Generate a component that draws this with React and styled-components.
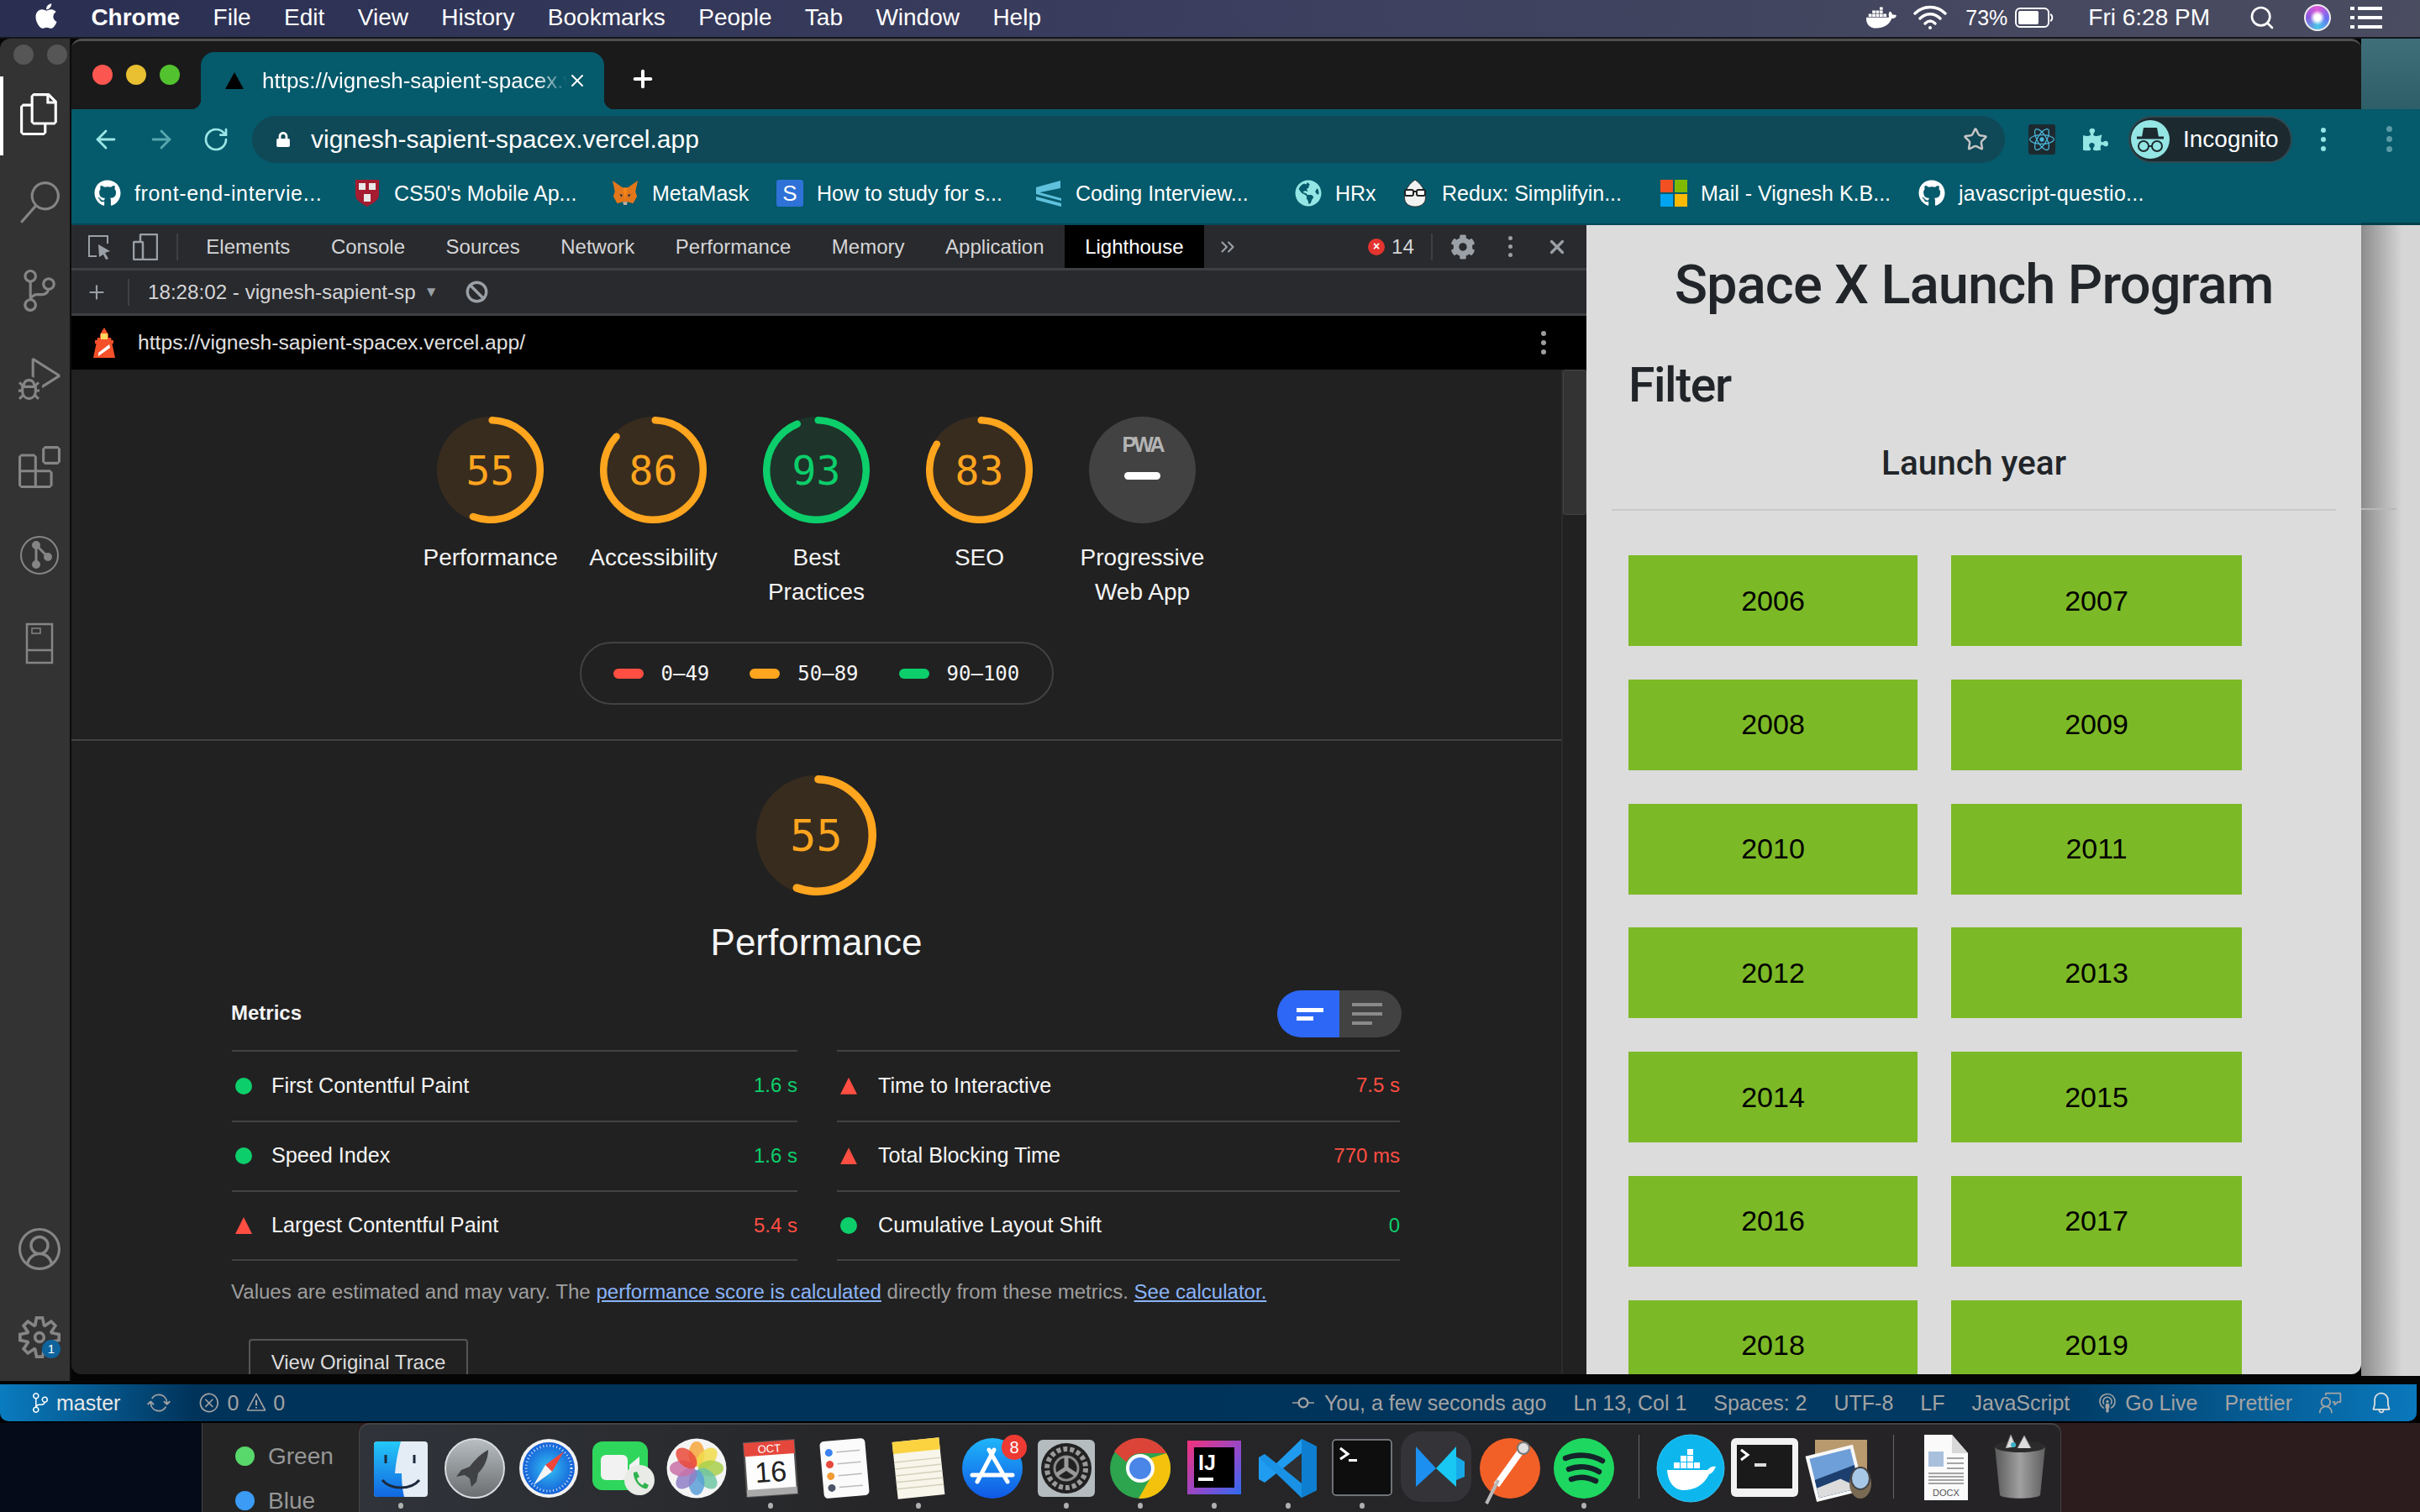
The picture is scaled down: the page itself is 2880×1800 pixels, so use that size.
import React from "react";
import styled, { createGlobalStyle } from "styled-components";
import {
  FaApple, FaDocker, FaGithub, FaLock, FaPuzzlePiece, FaReact, FaCog, FaGlobeAmericas,
} from "react-icons/fa";
import {
  VscFiles, VscSearch, VscSourceControl, VscDebugAlt, VscExtensions, VscAccount, VscSettingsGear,
  VscSync, VscError, VscWarning, VscBell, VscFeedback, VscBroadcast, VscGitCommit,
} from "react-icons/vsc";
import { ArrowLeft, ArrowRight, RotateCw, Star, Search, X, Plus, ChevronsRight, Ban } from "lucide-react";

const GlobalStyle = createGlobalStyle`
  html, body { margin: 0; padding: 0; background: #000; }
  body { font-family: "Liberation Sans", Arial, sans-serif; }
  * { box-sizing: border-box; }
`;

const Screen = styled.div`
  width: 2880px;
  height: 1800px;
  overflow: hidden;
  display: flex;
  flex-direction: column;
  background: #000;
`;
const Gap = styled.span`
  flex: none;
  width: ${(p) => p.$w}px;
`;

/* ---- mac menu bar ---- */
const MenuBar = styled.div`
  height: 46px;
  flex: none;
  display: flex;
  align-items: center;
  padding: 0 45px 2px 40px;
  color: #fff;
  font-size: 28px;
  background: linear-gradient(90deg, #2a2f52 0%, #3b3e5e 50%, #4a4d60 100%);
  border-bottom: 2px solid #15161c;
`;
const MenuItems = styled.div`
  display: flex;
  align-items: center;
  gap: 39.4px;
`;
const AppleMark = styled(FaApple)`
  width: 30px;
  height: 34px;
  margin-right: -1px;
  margin-top: -4px;
`;
const MenuLabel = styled.span`
  font-weight: ${(p) => (p.$bold ? 700 : 400)};
`;
const MenuStatus = styled.div`
  margin-left: auto;
  display: flex;
  align-items: center;
`;
const StatusText = styled.span`
  font-size: ${(p) => p.$size || 28}px;
  margin: ${(p) => p.$margin || "0"};
`;
const Siri = styled.div`
  width: 32px;
  height: 32px;
  border-radius: 50%;
  margin: 0 23px 0 34px;
  border: 2px solid #eee;
  background: radial-gradient(circle, #fff 0 18%, transparent 45%), conic-gradient(#e05ad8, #6a6cf0, #49c6e8, #8a5ae0, #e05ad8);
`;

/* ---- middle row: activity bar, chrome window, what is behind it ---- */
const Workspace = styled.div`
  height: 1602px;
  flex: none;
  display: flex;
  align-items: flex-start;
  background: #050505;
`;
const ActivityBar = styled.div`
  width: 85px;
  height: 1598px;
  flex: none;
  display: flex;
  flex-direction: column;
  background: #333333;
  border-right: 2px solid #0c0c0c;
  border-radius: 12px 0 0 0;
`;
const WindowDots = styled.div`
  height: 37px;
  display: flex;
  gap: 16px;
  padding: 0 0 0 16px;
  align-items: center;
`;
const GreyDot = styled.span`
  width: 24px;
  height: 24px;
  border-radius: 50%;
  background: #565656;
`;
const ActivitySlot = styled.div`
  height: 105px;
  flex: none;
  position: relative;
  display: flex;
  align-items: center;
  justify-content: center;
  padding-left: 11px;
  color: ${(p) => (p.$active ? "#fff" : "#858585")};
  &::before {
    content: "";
    display: ${(p) => (p.$active ? "block" : "none")};
    position: absolute;
    left: 0;
    top: 8px;
    bottom: 3px;
    width: 4px;
    background: #fff;
  }
`;
const ActivitySpacer = styled.div`
  flex: 1;
`;
const ActivityBadge = styled.span`
  position: absolute;
  left: 50px;
  top: 56px;
  width: 22px;
  height: 22px;
  border-radius: 50%;
  background: #0e639c;
  color: #fff;
  font-size: 15px;
  line-height: 22px;
  text-align: center;
`;

const ChromeWindow = styled.div`
  width: 2725px;
  height: 1590px;
  flex: none;
  display: flex;
  flex-direction: column;
  border-radius: 12px 12px 12px 12px;
  overflow: hidden;
  background: #1a1a1a;
  border-top: 3px solid #4f4f4f;
`;
const TabStrip = styled.div`
  height: 81px;
  flex: none;
  display: flex;
  align-items: flex-end;
  background: #1a1a1a;
  padding-left: 25px;
`;
const Traffic = styled.div`
  display: flex;
  gap: 16px;
  margin: 0 25px 29px 0;
`;
const Light = styled.span`
  width: 24px;
  height: 24px;
  border-radius: 50%;
  background: ${(p) => p.$c};
`;
const Tab = styled.div`
  width: 480px;
  height: 68px;
  position: relative;
  display: flex;
  align-items: center;
  padding: 0 20px 0 29px;
  background: #055a6b;
  border-radius: 16px 16px 0 0;
  color: #fff;
  font-size: 26px;
  &::before, &::after {
    content: "";
    position: absolute;
    bottom: 0;
    width: 12px;
    height: 12px;
  }
  &::before {
    left: -12px;
    background: radial-gradient(circle at 0 0, transparent 12px, #055a6b 12.5px);
  }
  &::after {
    right: -12px;
    background: radial-gradient(circle at 100% 0, transparent 12px, #055a6b 12.5px);
  }
`;
const TabTriangle = styled.span`
  width: 0;
  height: 0;
  flex: none;
  border-left: 11px solid transparent;
  border-right: 11px solid transparent;
  border-bottom: 20px solid #000;
  margin-right: 22px;
`;
const TabTitle = styled.span`
  flex: 1;
  overflow: hidden;
  white-space: nowrap;
  -webkit-mask-image: linear-gradient(90deg, #000 90%, transparent);
  mask-image: linear-gradient(90deg, #000 90%, transparent);
`;
const NewTab = styled(Plus)`
  margin: 0 0 20px 30px;
  color: #fff;
`;

const Toolbar = styled.div`
  height: 72px;
  flex: none;
  display: flex;
  align-items: center;
  background: #055a6b;
  padding: 0 20px 0 24px;
  color: #9be6e6;
`;
const NavGroup = styled.div`
  display: flex;
  align-items: center;
  gap: 32px;
  margin-right: 27px;
`;
const Omnibox = styled.div`
  width: 2086px;
  height: 56px;
  display: flex;
  align-items: center;
  padding: 0 20px 0 28px;
  background: #0f4856;
  border-radius: 28px;
  color: #fff;
  font-size: 30px;
`;
const Url = styled.span`
  margin-left: 24px;
  flex: 1;
`;
const ReactBox = styled.div`
  width: 32px;
  height: 36px;
  margin: 0 33px 0 28px;
  background: #1c2a30;
  border-radius: 3px;
  display: flex;
  align-items: center;
  justify-content: center;
  color: #4bb8dc;
`;
const IncognitoPill = styled.div`
  width: 195px;
  height: 56px;
  margin-left: 24px;
  display: flex;
  align-items: center;
  gap: 16px;
  background: #1c2a30;
  border: 2px solid #2e4a52;
  border-radius: 28px;
  color: #fff;
  font-size: 28px;
  padding-left: 1px;
`;
const IncognitoFace = styled.div`
  width: 46px;
  height: 46px;
  border-radius: 50%;
  background: #94e6e4;
  flex: none;
`;
const VDots = styled.div`
  display: flex;
  flex-direction: column;
  gap: ${(p) => p.$gap || 5}px;
  margin: ${(p) => p.$margin || "0"};
  span {
    width: ${(p) => p.$dot || 5}px;
    height: ${(p) => p.$dot || 5}px;
    border-radius: 50%;
    background: ${(p) => p.$c || "#9e9e9e"};
  }
`;
const BookmarkBar = styled.div`
  height: 66px;
  flex: none;
  display: flex;
  align-items: center;
  gap: 32px;
  padding: 0 0 8px 27px;
  background: #055a6b;
  border-bottom: 2px solid #04495a;
  color: #fff;
  font-size: 25px;
`;
const BookmarkItem = styled.div`
  display: flex;
  align-items: center;
  gap: 16px;
  white-space: nowrap;
  width: ${(p) => p.$w}px;
  flex: none;
  letter-spacing: ${(p) => p.$track || 0}px;
`;
const IconBox = styled.div`
  width: 32px;
  height: 32px;
  flex: none;
  display: flex;
  align-items: center;
  justify-content: center;
`;
const SSquare = styled(IconBox)`
  background: #2e72d8;
  border-radius: 3px;
  color: #fff;
  font-size: 26px;
`;
const MsGrid = styled(IconBox)`
  display: grid;
  grid-template-columns: 1fr 1fr;
  gap: 2px;
  i:nth-child(1) { background: #f25022; }
  i:nth-child(2) { background: #7fba00; }
  i:nth-child(3) { background: #00a4ef; }
  i:nth-child(4) { background: #ffb900; }
  i { display: block; height: 15px; }
`;

const ChromeBody = styled.div`
  flex: 1;
  min-height: 0;
  display: flex;
`;

/* ---- devtools ---- */
const Devtools = styled.div`
  width: 1803px;
  flex: none;
  display: flex;
  flex-direction: column;
  background: #212121;
`;
const DevBar = styled.div`
  height: 54px;
  flex: none;
  display: flex;
  align-items: center;
  background: #292a2d;
  border-bottom: 3px solid #3f4043;
  color: #9aa0a6;
`;
const DevSep = styled.span`
  width: 2px;
  height: 32px;
  background: #3f4043;
  margin: ${(p) => p.$margin || "0"};
`;
const DevTab = styled.div`
  height: 51px;
  display: flex;
  align-items: center;
  padding: 0 24.3px;
  font-size: 24px;
  color: ${(p) => (p.$active ? "#fff" : "#d4d5d7")};
  background: ${(p) => (p.$active ? "#000" : "transparent")};
`;
const MoreTabs = styled(ChevronsRight)`
  margin-left: 15px;
`;
const DevRight = styled.div`
  margin-left: auto;
  display: flex;
  align-items: center;
  padding-right: 22px;
`;
const ErrorDot = styled.span`
  width: 20px;
  height: 20px;
  border-radius: 50%;
  background: #e4342f;
  color: #fff;
  font-size: 14px;
  line-height: 19px;
  font-weight: 700;
  text-align: center;
  margin-right: 8px;
`;
const DevText = styled.span`
  font-size: 24.2px;
  color: #d4d5d7;
`;
const DropArrow = styled.span`
  font-size: 17px;
  margin: 0 32px 0 10px;
`;
const ReportBar = styled.div`
  height: 64px;
  flex: none;
  display: flex;
  align-items: center;
  background: #000;
  color: #e0e0e0;
  font-size: 24.7px;
  padding: 0 0 0 26px;
`;
const ReportUrl = styled.span`
  margin-left: 27px;
  flex: 1;
`;
const ReportBody = styled.div`
  flex: 1;
  min-height: 0;
  display: flex;
`;
const Report = styled.div`
  width: 1773px;
  flex: none;
  overflow: hidden;
  color: #f5f5f5;
`;
const ScrollTrack = styled.div`
  flex: 1;
  border-left: 2px solid #2c2c2c;
`;
const ScrollThumb = styled.div`
  height: 173px;
  background: #333;
  border-radius: 3px;
  border: 1px solid #444;
`;
const GaugeRow = styled.div`
  display: flex;
  justify-content: center;
  padding-top: 56px;
`;
const GaugeItem = styled.div`
  width: 194px;
  display: flex;
  flex-direction: column;
  align-items: center;
  text-align: center;
`;
const GaugeStack = styled.div`
  display: grid;
  width: ${(p) => p.$size}px;
  height: ${(p) => p.$size}px;
  & > * { grid-area: 1 / 1; }
`;
const GaugeNumber = styled.div`
  font-family: "DejaVu Sans Mono", Menlo, monospace;
  font-size: ${(p) => p.$font}px;
  color: ${(p) => p.$c};
  display: flex;
  align-items: center;
  justify-content: center;
`;
const GaugeLabel = styled.div`
  margin-top: 21px;
  width: 160px;
  font-size: 28px;
  line-height: 40.5px;
`;
const PwaBadge = styled.div`
  display: flex;
  flex-direction: column;
  align-items: center;
  padding-top: 21px;
  color: #b4b4b4;
  font-size: 25px;
  font-weight: 700;
  letter-spacing: -3px;
  line-height: 24px;
  i {
    display: block;
    width: 43px;
    height: 9px;
    margin-top: 21px;
    border-radius: 5px;
    background: #fff;
  }
`;
const Legend = styled.div`
  width: 564px;
  height: 75px;
  margin: 39px auto 41px;
  display: flex;
  align-items: center;
  gap: 48px;
  padding-left: 38px;
  border: 2px solid #424242;
  border-radius: 38px;
  font-family: "DejaVu Sans Mono", Menlo, monospace;
  font-size: 24px;
`;
const LegendItem = styled.div`
  display: flex;
  align-items: center;
  gap: 21px;
`;
const Swatch = styled.span`
  width: 36px;
  height: 12px;
  border-radius: 6px;
  background: ${(p) => p.$c};
`;
const Section = styled.div`
  border-top: 2px solid #424242;
  padding-top: 41px;
  display: flex;
  flex-direction: column;
  align-items: center;
`;
const SectionTitle = styled.div`
  margin-top: 26px;
  font-size: 44px;
  line-height: 60px;
`;
const Metrics = styled.div`
  width: 1393px;
  margin-top: 27px;
  align-self: flex-start;
  margin-left: 190px;
`;
const MetricsHead = styled.div`
  height: 56px;
  display: flex;
  align-items: center;
  justify-content: space-between;
  font-size: 24px;
  font-weight: 700;
  margin-bottom: 15px;
`;
const MetricsTitle = styled.span`
  margin-top: -3px;
`;
const Toggle = styled.div`
  width: 148px;
  height: 56px;
  display: flex;
  border-radius: 28px;
  overflow: hidden;
`;
const ToggleSide = styled.div`
  width: 74px;
  display: flex;
  flex-direction: column;
  justify-content: center;
  align-items: flex-start;
  gap: ${(p) => (p.$on ? 5 : 7)}px;
  padding-left: ${(p) => (p.$on ? 23 : 15)}px;
  background: ${(p) => (p.$on ? "#2d67f6" : "#424242")};
`;
const ToggleLine = styled.i`
  display: block;
  width: ${(p) => p.$w}px;
  height: ${(p) => (p.$on ? 5 : 4)}px;
  background: ${(p) => (p.$on ? "#fff" : "#8a8a8a")};
`;
const MetricGrid = styled.div`
  display: grid;
  grid-template-columns: 673px 670px;
  column-gap: 47px;
  padding-left: 1px;
`;
const MetricRow = styled.div`
  height: ${(p) => (p.$last ? 84 : 83.5)}px;
  display: flex;
  align-items: center;
  border-top: 2px solid #424242;
  ${(p) => (p.$last ? "border-bottom: 2px solid #424242;" : "")}
`;
const MetricIcon = styled.span`
  width: 20px;
  height: 20px;
  flex: none;
  margin: 0 ${(p) => (p.$col ? 25 : 23)}px 0 4px;
  background: ${(p) => (p.$bad ? "#ff4e42" : "#0cce6b")};
  border-radius: 50%;
  ${(p) => (p.$bad ? "border-radius: 0; clip-path: polygon(50% 0, 100% 100%, 0 100%);" : "")}
`;
const MetricName = styled.span`
  font-size: 25.2px;
  margin-top: -1px;
`;
const MetricValue = styled.span`
  margin-left: auto;
  font-size: 24px;
  margin-top: -1px;
  color: ${(p) => (p.$bad ? "#ff4e42" : "#0cce6b")};
`;
const Footnote = styled.div`
  margin-top: 23px;
  font-size: 24.05px;
  line-height: 28px;
  color: #9e9e9e;
  a { color: #8ab4f8; text-decoration: underline; }
`;
const TraceButton = styled.div`
  margin: 42px 0 0 21px;
  width: 261px;
  height: 56px;
  display: flex;
  align-items: center;
  justify-content: center;
  border: 2px solid #555;
  border-radius: 4px;
  font-size: 24px;
  color: #dcdcdc;
`;

/* ---- the page in the browser ---- */
const Page = styled.div`
  flex: 1;
  overflow: hidden;
  background: #dcdcdc;
  color: #212529;
  padding-top: 33px;
`;
const PageTitle = styled.h1`
  margin: 0;
  text-align: center;
  font-family: Roboto, "Liberation Sans", sans-serif;
  font-weight: 500;
  font-size: 65px;
  letter-spacing: -0.9px;
  line-height: 76px;
`;
const FilterTitle = styled.h2`
  margin: 49px 0 0 50px;
  font-family: Roboto, "Liberation Sans", sans-serif;
  font-weight: 500;
  font-size: 57px;
  letter-spacing: -1.4px;
  line-height: 66px;
`;
const YearTitle = styled.h3`
  margin: 35px 0 0;
  text-align: center;
  font-family: Roboto, "Liberation Sans", sans-serif;
  font-weight: 500;
  font-size: 40.5px;
  line-height: 48px;
`;
const Rule = styled.div`
  height: 2px;
  margin: 31px 30px 53px;
  background: #c9c9c9;
`;
const YearGrid = styled.div`
  display: grid;
  grid-template-columns: 344px 346px;
  grid-auto-rows: 108px;
  column-gap: 40px;
  row-gap: 39.8px;
  padding-left: 50px;
`;
const YearButton = styled.div`
  display: flex;
  align-items: center;
  justify-content: center;
  background: #7cb927;
  color: #000;
  font-size: 34px;
`;

const Behind = styled.div`
  flex: 1;
  height: 1592px;
  display: flex;
  flex-direction: column;
`;
const BehindTop = styled.div`
  height: 84px;
  background: linear-gradient(180deg, #3f6f79, #2e5f69);
`;
const BehindBar = styled.div`
  height: 138px;
  background: #055a6b;
  padding: 20px 0 0 30px;
  border-bottom: 3px solid #04404d;
`;
const BehindPage = styled.div`
  flex: 1;
  background: linear-gradient(90deg, #8c8c8c, #d6d6d6 70%);
  padding-top: 337px;
  i { display: block; height: 2px; width: 42px; background: #b8b8b8; }
`;

/* ---- vs code status bar ---- */
const StatusBar = styled.div`
  height: 44px;
  width: 2876px;
  flex: none;
  display: flex;
  align-items: center;
  padding: 0 28px 0 36px;
  border-radius: 0 0 10px 10px;
  background: linear-gradient(90deg, #0a7cc0 0%, #00335a 8%, #00335a 50%, #003a63 85%, #0a78bc 100%);
  color: #a3a3a3;
  font-size: 25px;
`;
const StatusGroup = styled.div`
  display: flex;
  align-items: center;
  margin-left: ${(p) => (p.$auto ? "auto" : "0")};
`;
const StatusLabel = styled.span`
  margin: ${(p) => p.$margin || "0"};
  color: ${(p) => p.$c || "inherit"};
  white-space: nowrap;
`;
const CommitIcon = styled(VscGitCommit)`
  transform: rotate(90deg);
`;
const ErrorIcon = styled(VscError)`
  margin-left: 33px;
`;
const BellIcon = styled(VscBell)`
  margin-left: 32px;
  color: #e0e0e0;
`;

/* ---- dock ---- */
const DockRow = styled.div`
  flex: 1;
  display: flex;
  margin-top: 2px;
  background: #2c1c1e;
`;
const Wallpaper = styled.div`
  width: 240px;
  flex: none;
  background: #060b1a;
`;
const ColorPanel = styled.div`
  width: 187px;
  flex: none;
  background: #242424;
  border-left: 1px solid #444;
  padding: 23px 0 0 39px;
  font-size: 28px;
  color: #979797;
  display: flex;
  flex-direction: column;
  gap: 20px;
`;
const ColorRow = styled.div`
  display: flex;
  align-items: center;
  gap: 16px;
  line-height: 33px;
`;
const ColorDot = styled.span`
  width: 23px;
  height: 23px;
  border-radius: 50%;
  background: ${(p) => p.$c};
`;
const Dock = styled.div`
  width: 2026px;
  flex: none;
  display: flex;
  padding-left: 5px;
  background: linear-gradient(90deg, #30343a, #262628 30%, #252325);
  border-top: 2px solid #444;
  border-right: 1px solid #444;
  border-left: 1px solid #444;
  border-radius: 12px 12px 0 0;
`;
const DockItem = styled.div`
  width: 88px;
  flex: none;
  display: flex;
  flex-direction: column;
  align-items: center;
  padding-top: 16px;
  svg { display: block; overflow: visible; }
`;
const DockDot = styled.span`
  width: 6px;
  height: 7px;
  border-radius: 50%;
  margin-top: 5px;
  background: ${(p) => (p.$on ? "#b0b0b0" : "transparent")};
`;
const DockSep = styled.div`
  width: 1px;
  height: 76px;
  margin: 12px ${(p) => p.$right}px 0 ${(p) => p.$left}px;
  background: #666;
  flex: none;
`;
const RaisedSvg = styled.svg`
  margin-top: ${(p) => p.$up}px;
`;

/* drawn icons */
const Wifi = () => (
  <svg width="42" height="32" viewBox="0 0 42 32" fill="none" stroke="#fff" strokeWidth="3.4" strokeLinecap="round">
    <path d="M3 11 C13 1 29 1 39 11" />
    <path d="M9 17 C16 10 26 10 33 17" />
    <path d="M15 23 C19 19 23 19 27 23" />
    <circle cx="21" cy="28" r="2" fill="#fff" stroke="none" />
  </svg>
);
const Battery = () => (
  <svg width="46" height="24" viewBox="0 0 46 24" fill="none">
    <rect x="1" y="1" width="39" height="22" rx="5" stroke="#fff" strokeWidth="2" />
    <rect x="4" y="4" width="24" height="16" rx="2" fill="#fff" />
    <path d="M42 8 C45 9 45 15 42 16" stroke="#fff" strokeWidth="2" />
  </svg>
);
const ControlList = () => (
  <svg width="38" height="28" viewBox="0 0 38 28" fill="#fff">
    <rect x="0" y="1" width="5" height="4" /><rect x="9" y="1" width="29" height="4" />
    <rect x="0" y="12" width="5" height="4" /><rect x="9" y="12" width="29" height="4" />
    <rect x="0" y="23" width="5" height="4" /><rect x="9" y="23" width="29" height="4" />
  </svg>
);
const GitLens = () => (
  <svg width="48" height="48" viewBox="0 0 48 48" fill="none" stroke="currentColor" strokeWidth="2">
    <circle cx="24" cy="24" r="22" />
    <circle cx="20" cy="12" r="4" fill="currentColor" />
    <circle cx="20" cy="35" r="4" fill="currentColor" />
    <circle cx="34" cy="26" r="4" fill="currentColor" />
    <path d="M20 12 V35 M20 12 L34 26" strokeWidth="3" />
  </svg>
);
const BookIcon = () => (
  <svg width="34" height="50" viewBox="0 0 34 50" fill="none" stroke="currentColor" strokeWidth="2.5">
    <rect x="2" y="2" width="30" height="46" />
    <path d="M2 33 H32" />
    <rect x="8" y="7" width="10" height="6" strokeWidth="1.5" />
  </svg>
);
const InspectIcon = () => (
  <svg width="28" height="30" viewBox="0 0 28 30" fill="none" stroke="#9aa0a6" strokeWidth="2">
    <path d="M11 26 H2 V2 H24 V11" />
    <path d="M13 12 L27 20 L21 22 L25 29 L22 30 L19 24 L14 27 Z" fill="#9aa0a6" stroke="none" />
  </svg>
);
const DeviceIcon = () => (
  <svg width="30" height="32" viewBox="0 0 30 32" fill="none" stroke="#9aa0a6" strokeWidth="2.5">
    <rect x="9" y="1" width="20" height="30" rx="1" />
    <rect x="1" y="10" width="11" height="21" rx="1" fill="#292a2d" />
  </svg>
);
const Lighthouse = () => (
  <svg width="26" height="36" viewBox="0 0 26 36">
    <path d="M13 0 L18 8 V12 H21 L26 36 H0 L5 12 H8 V8 Z" fill="#f4502a" />
    <rect x="9" y="7" width="8" height="7" fill="#fbd75b" />
    <path d="M6 30 L19 20 L20 24 L6 34 Z" fill="#fff" />
    <rect x="2" y="15" width="22" height="4" fill="#f4502a" />
  </svg>
);
const Harvard = () => (
  <svg width="30" height="32" viewBox="0 0 30 32">
    <path d="M1 0 H29 V18 C29 25 20 29 15 32 C10 29 1 25 1 18 Z" fill="#a51c30" />
    <g fill="#e8e8e8">
      <rect x="5" y="4" width="8" height="8" /><rect x="17" y="4" width="8" height="8" /><rect x="11" y="17" width="8" height="9" />
    </g>
  </svg>
);
const Fox = () => (
  <svg width="34" height="32" viewBox="0 0 34 32">
    <path d="M1 0 L14 9 H20 L33 0 L30 14 L32 20 L27 29 L20 27 H14 L7 29 L2 20 L4 14 Z" fill="#e2761b" />
    <path d="M14 27 H20 L19 31 H15 Z" fill="#c0ad9e" />
    <path d="M10 17 L14 18 L12 21 Z M24 17 L20 18 L22 21 Z" fill="#233447" />
    <path d="M14 9 L17 24 L20 9 Z" fill="#f6851b" />
  </svg>
);
const StackIcon = () => (
  <svg width="32" height="32" viewBox="0 0 32 32">
    <path d="M1 9 L30 1 V10 L1 16 Z" fill="#5fc1dc" />
    <path d="M1 14 L31 22 V25 L1 17 Z M1 20 L31 28 V32 L1 24 Z" fill="#5fc1dc" />
  </svg>
);
const Nerd = () => (
  <svg width="32" height="34" viewBox="0 0 32 34" fill="none">
    <path d="M16 1 C26 8 30 18 28 26 C26 31 21 33 16 33 C11 33 6 31 4 26 C2 18 6 8 16 1 Z" fill="#f2f2f2" stroke="#333" />
    <rect x="4" y="13" width="10" height="7" rx="2" fill="#fff" stroke="#222" strokeWidth="2" />
    <rect x="18" y="13" width="10" height="7" rx="2" fill="#fff" stroke="#222" strokeWidth="2" />
    <path d="M14 15 H18" stroke="#222" strokeWidth="2" />
  </svg>
);
const SpyFace = () => (
  <IncognitoFace>
    <svg width="46" height="46" viewBox="0 0 46 46" fill="none" stroke="#1c2a30" strokeWidth="2">
      <path d="M15 9 H31 L33 20 H13 Z" fill="#1c2a30" stroke="none" />
      <path d="M7 21 H39" strokeWidth="3" />
      <circle cx="15" cy="31" r="6" />
      <circle cx="31" cy="31" r="6" />
      <path d="M21 31 H25" />
    </svg>
  </IncognitoFace>
);

const Finder = () => (
  <svg width="72" height="72" viewBox="0 0 72 72">
    <defs>
      <linearGradient id="fb" x1="0" y1="0" x2="0" y2="1"><stop offset="0" stopColor="#24c8f8" /><stop offset="1" stopColor="#1266e0" /></linearGradient>
    </defs>
    <rect x="4" y="4" width="64" height="66" rx="4" fill="#e4edf6" />
    <path d="M8 4 H36 C32 18 30 30 29 42 H37 C37 52 38 62 40 70 H8 C5 70 4 68 4 66 V8 C4 6 6 4 8 4 Z" fill="url(#fb)" />
    <path d="M18 20 V30 M52 20 V30" stroke="#1c2a3c" strokeWidth="3" />
    <path d="M14 50 C24 62 48 62 58 50" stroke="#1c2a3c" strokeWidth="3" fill="none" />
  </svg>
);
const Launchpad = () => (
  <svg width="72" height="72" viewBox="0 0 72 72">
    <defs>
      <linearGradient id="lp" x1="0" y1="0" x2="0" y2="1"><stop offset="0" stopColor="#b8bec2" /><stop offset="1" stopColor="#6a6d6f" /></linearGradient>
    </defs>
    <circle cx="36" cy="36" r="35" fill="url(#lp)" stroke="#d8dcdf" strokeWidth="2" />
    <path d="M52 14 C52 26 46 36 40 42 L38 52 L32 58 L30 48 L24 44 L14 46 L20 38 L30 34 C36 26 44 18 52 14 Z" fill="#3f4144" />
  </svg>
);
const Safari = () => (
  <svg width="72" height="72" viewBox="0 0 72 72">
    <defs>
      <radialGradient id="sf"><stop offset="0" stopColor="#34c0f4" /><stop offset="1" stopColor="#1460d8" /></radialGradient>
    </defs>
    <circle cx="36" cy="36" r="35" fill="#f2f2f2" />
    <circle cx="36" cy="36" r="31" fill="url(#sf)" />
    <circle cx="36" cy="36" r="27" fill="none" stroke="#d8e8f8" strokeWidth="3" strokeDasharray="1 3" />
    <path d="M54 16 L40 40 L32 32 Z" fill="#f0453a" />
    <path d="M18 56 L32 32 L40 40 Z" fill="#f4f4f4" />
  </svg>
);
const FaceTime = () => (
  <svg width="72" height="72" viewBox="0 0 72 72">
    <rect x="0" y="4" width="66" height="58" rx="12" fill="#2fd65c" />
    <rect x="10" y="20" width="32" height="30" rx="6" fill="#f2f2f2" />
    <path d="M44 32 L56 22 V48 L44 40 Z" fill="#f2f2f2" />
    <circle cx="56" cy="50" r="18" fill="#e8ebe6" />
    <path d="M49 41 L53 40 L56 46 L53 48 C54 52 57 55 60 56 L62 53 L67 56 L65 60 C58 62 48 50 49 41 Z" fill="#2fb34f" />
  </svg>
);
const Photos = () => {
  const petals = ["#f6a63a", "#f0dc4a", "#a8cf4a", "#6ec6a4", "#5b9fd8", "#8f7fc6", "#c970a8", "#e94a3a"];
  return (
    <svg width="72" height="72" viewBox="0 0 72 72">
      <circle cx="36" cy="36" r="35.5" fill="#f4f4f4" />
      {petals.map((c, i) => (
        <ellipse key={c} cx="36" cy="19" rx="9.5" ry="15" fill={c} opacity="0.85" transform={`rotate(${i * 45} 36 36)`} />
      ))}
    </svg>
  );
};
const Calendar = () => (
  <svg width="72" height="72" viewBox="0 0 72 72">
    <g transform="rotate(-4 36 36)">
      <rect x="6" y="4" width="60" height="64" fill="#fdfdfd" stroke="#555" strokeWidth="2" />
      <rect x="6" y="4" width="60" height="16" fill="#e6473c" />
      <text x="36" y="17" textAnchor="middle" fill="#fff" fontSize="13" fontFamily="Liberation Sans, sans-serif">OCT</text>
      <text x="36" y="52" textAnchor="middle" fill="#222" fontSize="34" fontFamily="Liberation Sans, sans-serif">16</text>
      <rect x="6" y="60" width="60" height="8" fill="#aaa" />
    </g>
  </svg>
);
const Reminders = () => (
  <svg width="72" height="72" viewBox="0 0 72 72">
    <g transform="rotate(-5 36 36)">
      <rect x="9" y="2" width="54" height="68" rx="5" fill="#fbfbfb" />
      <circle cx="19" cy="16" r="4.5" fill="#3b82f0" /><circle cx="19" cy="30" r="4.5" fill="#e8483c" />
      <circle cx="19" cy="44" r="4.5" fill="#f29a36" /><circle cx="19" cy="58" r="4.5" fill="#4a5568" />
      <path d="M28 16 H56 M28 30 H56 M28 44 H56 M28 58 H56" stroke="#bbb" strokeWidth="1.5" />
    </g>
  </svg>
);
const Notes = () => (
  <svg width="72" height="72" viewBox="0 0 72 72">
    <g transform="rotate(-6 36 36)">
      <rect x="8" y="2" width="56" height="68" fill="#f8f6ea" />
      <rect x="8" y="2" width="56" height="14" fill="#fbd341" />
      <path d="M8 26 H64 M8 34 H64 M8 42 H64 M8 50 H64 M8 58 H64" stroke="#d4d0bc" strokeWidth="1.5" />
    </g>
  </svg>
);
const AppStore = () => (
  <svg width="72" height="72" viewBox="0 0 72 72">
    <defs>
      <linearGradient id="as" x1="0" y1="0" x2="0" y2="1"><stop offset="0" stopColor="#1fb6fb" /><stop offset="1" stopColor="#1058e4" /></linearGradient>
    </defs>
    <circle cx="36" cy="36" r="36" fill="url(#as)" />
    <path d="M38 14 L18 52 M32 14 L54 52 M12 44 H60" stroke="#fff" strokeWidth="5" strokeLinecap="round" />
    <circle cx="62" cy="11" r="15" fill="#ee3a32" />
    <text x="62" y="18" textAnchor="middle" fill="#fff" fontSize="20" fontFamily="Liberation Sans, sans-serif">8</text>
  </svg>
);
const SysPrefs = () => (
  <svg width="72" height="72" viewBox="0 0 72 72">
    <rect x="2" y="2" width="68" height="68" rx="6" fill="#b4bcc0" />
    <circle cx="36" cy="36" r="30" fill="#222" />
    <circle cx="36" cy="36" r="23" fill="none" stroke="#9a9a9a" strokeWidth="6" strokeDasharray="5 3" />
    <circle cx="36" cy="36" r="14" fill="none" stroke="#8a8a8a" strokeWidth="3" />
    <path d="M36 22 V36 L24 44 M36 36 L48 44" stroke="#9a9a9a" strokeWidth="5" fill="none" />
  </svg>
);
const ChromeLogo = () => (
  <svg width="72" height="72" viewBox="0 0 72 72">
    <circle cx="36" cy="36" r="36" fill="#2da44e" />
    <path d="M36 0 A36 36 0 0 1 67.2 18 H36 A18 18 0 0 0 19.5 28.5 L5 16 A36 36 0 0 1 36 0 Z" fill="#db4437" />
    <path d="M67.2 18 A36 36 0 0 1 34 72 L50 44 A18 18 0 0 0 48 24 Z" fill="#f4c20d" />
    <circle cx="36" cy="36" r="17" fill="#fff" />
    <circle cx="36" cy="36" r="13" fill="#4a86e8" />
  </svg>
);
const IntelliJ = () => (
  <svg width="72" height="72" viewBox="0 0 72 72">
    <defs>
      <linearGradient id="ij" x1="0" y1="0" x2="1" y2="1"><stop offset="0" stopColor="#f5317a" /><stop offset="0.6" stopColor="#8a4bd0" /><stop offset="1" stopColor="#2d6cf0" /></linearGradient>
    </defs>
    <rect x="4" y="3" width="64" height="64" fill="url(#ij)" />
    <rect x="12" y="11" width="48" height="48" fill="#000" />
    <text x="17" y="38" fill="#fff" fontSize="25" fontWeight="700" fontFamily="Liberation Sans, sans-serif">IJ</text>
    <rect x="17" y="47" width="18" height="4" fill="#fff" />
  </svg>
);
const VSCode = () => (
  <svg width="72" height="72" viewBox="0 0 72 72">
    <path d="M52 1 L70 10 V62 L52 71 L22 42 L8 53 L1 49 V23 L8 19 L22 30 Z" fill="#1f9cf0" />
    <path d="M52 1 L70 10 V62 L52 71 Z" fill="#0e7fd0" />
    <path d="M52 18 V54 L30 36 Z" fill="#2d2f33" />
    <path d="M1 23 L8 19 L52 54 V71 Z" fill="#1488dc" opacity="0.5" />
  </svg>
);
const TermDark = () => (
  <svg width="72" height="72" viewBox="0 0 72 72">
    <rect x="1" y="2" width="70" height="66" rx="4" fill="#0e0e0e" stroke="#8a9096" strokeWidth="1.5" />
    <path d="M10 12 L19 19 L10 25" stroke="#fff" strokeWidth="3" fill="none" />
    <rect x="20" y="25" width="10" height="3" fill="#fff" />
  </svg>
);
const Butterfly = () => (
  <svg width="72" height="72" viewBox="0 0 72 72">
    <rect x="-6" y="-8" width="84" height="84" rx="24" fill="#333338" />
    <path d="M12 10 L36 36 L12 58 Z" fill="#1d8ff0" />
    <path d="M60 10 L36 36 L60 58 Z" fill="#18c8f2" />
    <path d="M60 22 L70 28 V46 L60 50 Z" fill="#18a8e8" />
  </svg>
);
const Postman = () => (
  <svg width="72" height="72" viewBox="0 0 72 72">
    <circle cx="36" cy="36" r="36" fill="#f26027" />
    <path d="M50 14 L20 56" stroke="#fff" strokeWidth="8" />
    <path d="M22 50 L8 78" stroke="#b8b8b8" strokeWidth="4" />
    <circle cx="52" cy="12" r="7" fill="#e0e0e0" stroke="#777" strokeWidth="2" />
  </svg>
);
const Spotify = () => (
  <svg width="72" height="72" viewBox="0 0 72 72">
    <circle cx="36" cy="36" r="36" fill="#1ed760" />
    <path d="M14 24 C28 18 46 20 58 27 M18 37 C30 32 44 34 54 40 M21 49 C31 45 42 47 50 51" fill="none" stroke="#15232a" strokeWidth="6.5" strokeLinecap="round" />
  </svg>
);
const DockerIcon = () => (
  <RaisedSvg $up={-4} width="80" height="80" viewBox="0 0 80 80">
    <circle cx="40" cy="40" r="40" fill="#0db7ed" stroke="#35c4f2" />
    <path d="M12 42 H60 C63 38 67 37 70 38 C68 42 66 46 62 47 C56 60 44 66 32 66 C20 66 13 56 12 42 Z" fill="#fff" />
    <g fill="#fff">
      <rect x="20" y="33" width="7" height="7" /><rect x="28" y="33" width="7" height="7" /><rect x="36" y="33" width="7" height="7" /><rect x="44" y="33" width="7" height="7" />
      <rect x="28" y="25" width="7" height="7" /><rect x="36" y="25" width="7" height="7" /><rect x="36" y="17" width="7" height="7" />
    </g>
  </RaisedSvg>
);
const TermLight = () => (
  <svg width="80" height="72" viewBox="0 0 80 72">
    <rect x="0" y="0" width="80" height="70" rx="6" fill="#f2f2f2" />
    <rect x="7" y="8" width="66" height="52" fill="#1a1a1a" />
    <path d="M12 14 L20 20 L12 26" stroke="#fff" strokeWidth="3" fill="none" />
    <rect x="28" y="30" width="14" height="4" fill="#ddd" />
  </svg>
);
const Preview = () => (
  <svg width="80" height="72" viewBox="0 0 80 72">
    <rect x="12" y="2" width="62" height="58" fill="#b89a6e" />
    <g transform="rotate(-14 35 40)">
      <rect x="6" y="14" width="58" height="56" fill="#f8f8f8" />
      <rect x="10" y="18" width="50" height="48" fill="#6f9fd8" />
      <path d="M10 44 L60 38 V66 H10 Z" fill="#1c3f70" />
      <path d="M10 54 L40 50 L60 66 H10 Z" fill="#dcdcdc" />
    </g>
    <ellipse cx="66" cy="54" rx="13" ry="18" fill="#7a6a54" />
    <ellipse cx="66" cy="48" rx="11" ry="13" fill="#a8c8e8" stroke="#444" strokeWidth="2" />
  </svg>
);
const DocxFile = () => (
  <RaisedSvg $up={-4} width="54" height="78" viewBox="0 0 54 78">
    <path d="M1 0 H34 L53 22 V78 H1 Z" fill="#fafafa" />
    <path d="M34 0 L53 22 H34 Z" fill="#d8d8d8" />
    <rect x="6" y="20" width="18" height="18" fill="#a8c0dc" />
    <path d="M28 28 H48 M28 34 H48 M28 40 H48 M6 46 H48 M6 50 H48 M6 54 H48 M6 58 H48" stroke="#888" strokeWidth="1.5" />
    <text x="27" y="73" textAnchor="middle" fontSize="11" fill="#555" fontFamily="Liberation Sans, sans-serif">DOCX</text>
  </RaisedSvg>
);
const Trash = () => (
  <RaisedSvg $up={-6} width="62" height="78" viewBox="0 0 62 78">
    <defs>
      <linearGradient id="tr" x1="0" y1="0" x2="1" y2="0"><stop offset="0" stopColor="#5a5a5a" /><stop offset="0.5" stopColor="#a0a0a0" /><stop offset="1" stopColor="#5e5e5e" /></linearGradient>
    </defs>
    <path d="M1 16 H61 L55 74 C50 79 12 79 7 74 Z" fill="url(#tr)" />
    <ellipse cx="31" cy="16" rx="30" ry="7" fill="#2b2b2b" />
    <path d="M14 18 L20 2 L26 16 M28 18 L36 3 L44 18" fill="#ddd" stroke="#888" />
    <circle cx="23" cy="14" r="3" fill="#3cb4c8" />
  </RaisedSvg>
);

const menus = ["File", "Edit", "View", "History", "Bookmarks", "People", "Tab", "Window", "Help"];
const devTabs = ["Elements", "Console", "Sources", "Network", "Performance", "Memory", "Application"];
const years = [2006, 2007, 2008, 2009, 2010, 2011, 2012, 2013, 2014, 2015, 2016, 2017, 2018, 2019];
const metricRows = [
  [{ name: "First Contentful Paint", value: "1.6 s" }, { name: "Time to Interactive", value: "7.5 s", bad: true }],
  [{ name: "Speed Index", value: "1.6 s" }, { name: "Total Blocking Time", value: "770 ms", bad: true }],
  [{ name: "Largest Contentful Paint", value: "5.4 s", bad: true }, { name: "Cumulative Layout Shift", value: "0" }],
];
const gauges = [
  { score: 55, label: "Performance", c: "#ffa51e", bg: "#382c1f" },
  { score: 86, label: "Accessibility", c: "#ffa51e", bg: "#382c1f" },
  { score: 93, label: "Best Practices", c: "#0cce6b", bg: "#1e3329" },
  { score: 83, label: "SEO", c: "#ffa51e", bg: "#382c1f" },
];
const dockA = [
  [Finder, 1], [Launchpad, 0], [Safari, 0], [FaceTime, 0], [Photos, 0], [Calendar, 1], [Reminders, 0], [Notes, 1], [AppStore, 0],
  [SysPrefs, 1], [ChromeLogo, 1], [IntelliJ, 1], [VSCode, 1], [TermDark, 1], [Butterfly, 0], [Postman, 0], [Spotify, 1],
];
const dockB = [[DockerIcon, 0], [TermLight, 0], [Preview, 0]];
const dockC = [[DocxFile, 0], [Trash, 0]];

const Gauge = ({ score, c, bg, size, font }) => (
  <GaugeStack $size={size}>
    <svg width={size} height={size} viewBox="0 0 120 120">
      <circle cx="60" cy="60" r="60" fill={bg} />
      <circle
        cx="60" cy="60" r="56" fill="none" stroke={c} strokeWidth="8" strokeLinecap="round"
        strokeDasharray={`${(score / 100) * 351.858} 351.858`} transform="rotate(-87.9 60 60)"
      />
    </svg>
    <GaugeNumber $font={font} $c={c}>{score}</GaugeNumber>
  </GaugeStack>
);

const Bookmark = ({ icon, w, track, children }) => (
  <BookmarkItem $w={w} $track={track}>
    <IconBox>{icon}</IconBox>
    <span>{children}</span>
  </BookmarkItem>
);

const DockIcons = ({ items }) => items.map(([Icon, on], i) => (
  <DockItem key={i}>
    <Icon />
    <DockDot $on={on} />
  </DockItem>
));

export default function App() {
  return (
    <Screen>
      <GlobalStyle />
      <MenuBar>
        <MenuItems>
          <AppleMark />
          <MenuLabel $bold>Chrome</MenuLabel>
          {menus.map((m) => <MenuLabel key={m}>{m}</MenuLabel>)}
        </MenuItems>
        <MenuStatus>
          <FaDocker size={36} />
          <Gap $w={19} />
          <Wifi />
          <StatusText $size={25} $margin="0 9px 0 21px">73%</StatusText>
          <Battery />
          <StatusText $margin="0 46px 0 41px">Fri 6:28 PM</StatusText>
          <Search size={32} strokeWidth={2} />
          <Siri />
          <ControlList />
        </MenuStatus>
      </MenuBar>

      <Workspace>
        <ActivityBar>
          <WindowDots><GreyDot /><GreyDot /></WindowDots>
          <ActivitySlot $active><VscFiles size={50} /></ActivitySlot>
          <ActivitySlot><VscSearch size={50} /></ActivitySlot>
          <ActivitySlot><VscSourceControl size={50} /></ActivitySlot>
          <ActivitySlot><VscDebugAlt size={50} /></ActivitySlot>
          <ActivitySlot><VscExtensions size={50} /></ActivitySlot>
          <ActivitySlot><GitLens /></ActivitySlot>
          <ActivitySlot><BookIcon /></ActivitySlot>
          <ActivitySpacer />
          <ActivitySlot><VscAccount size={50} /></ActivitySlot>
          <ActivitySlot><VscSettingsGear size={50} /><ActivityBadge>1</ActivityBadge></ActivitySlot>
        </ActivityBar>

        <ChromeWindow>
          <TabStrip>
            <Traffic>
              <Light $c="#fb5750" /><Light $c="#e8bf31" /><Light $c="#52c22f" />
            </Traffic>
            <Tab>
              <TabTriangle />
              <TabTitle>https://vignesh-sapient-spacex.vercel.app</TabTitle>
              <X size={24} />
            </Tab>
            <NewTab size={32} strokeWidth={3} />
          </TabStrip>

          <Toolbar>
            <NavGroup>
              <ArrowLeft size={34} />
              <ArrowRight size={34} opacity={0.55} />
              <RotateCw size={32} />
            </NavGroup>
            <Omnibox>
              <FaLock size={18} />
              <Url>vignesh-sapient-spacex.vercel.app</Url>
              <Star size={30} color="#c5c5c5" />
            </Omnibox>
            <ReactBox><FaReact size={30} /></ReactBox>
            <FaPuzzlePiece size={30} color="#94e6e4" />
            <IncognitoPill>
              <SpyFace />
              Incognito
            </IncognitoPill>
            <VDots $margin="0 0 0 34px" $dot={6} $c="#94e6e4"><span /><span /><span /></VDots>
          </Toolbar>

          <BookmarkBar>
            <Bookmark w={277} track={0.65} icon={<FaGithub size={32} />}>front-end-intervie...</Bookmark>
            <Bookmark w={275} icon={<Harvard />}>CS50's Mobile Ap...</Bookmark>
            <Bookmark w={164} icon={<Fox />}>MetaMask</Bookmark>
            <Bookmark w={276} icon={<SSquare>S</SSquare>}>How to study for s...</Bookmark>
            <Bookmark w={277} icon={<StackIcon />}>Coding Interview...</Bookmark>
            <Bookmark w={95} icon={<FaGlobeAmericas size={32} color="#94e6e4" />}>HRx</Bookmark>
            <Bookmark w={276} icon={<Nerd />}>Redux: Simplifyin...</Bookmark>
            <Bookmark w={275} icon={<MsGrid><i /><i /><i /><i /></MsGrid>}>Mail - Vignesh K.B...</Bookmark>
            <Bookmark w={290} track={0.25} icon={<FaGithub size={32} />}>javascript-questio...</Bookmark>
          </BookmarkBar>

          <ChromeBody>
            <Devtools>
              <DevBar>
                <Gap $w={19} />
                <InspectIcon />
                <Gap $w={26} />
                <DeviceIcon />
                <DevSep $margin="0 9px 0 22px" />
                {devTabs.map((t) => <DevTab key={t}>{t}</DevTab>)}
                <DevTab $active>Lighthouse</DevTab>
                <MoreTabs size={26} />
                <DevRight>
                  <ErrorDot>×</ErrorDot>
                  <DevText>14</DevText>
                  <DevSep $margin="0 21px 0 20px" />
                  <FaCog size={30} />
                  <VDots $margin="0 40px 0 39px" $dot={5}><span /><span /><span /></VDots>
                  <X size={26} strokeWidth={3} />
                </DevRight>
              </DevBar>
              <DevBar>
                <Gap $w={17} />
                <Plus size={26} />
                <DevSep $margin="0 22px 0 24px" />
                <DevText>18:28:02 - vignesh-sapient-sp</DevText>
                <DropArrow>▼</DropArrow>
                <Ban size={27} strokeWidth={3} />
              </DevBar>
              <ReportBar>
                <Lighthouse />
                <ReportUrl>https://vignesh-sapient-spacex.vercel.app/</ReportUrl>
                <VDots $margin="0 48px 0 0" $dot={6}><span /><span /><span /></VDots>
              </ReportBar>
              <ReportBody>
                <Report>
                  <GaugeRow>
                    {gauges.map((g) => (
                      <GaugeItem key={g.label}>
                        <Gauge {...g} size={127} font={48} />
                        <GaugeLabel>{g.label}</GaugeLabel>
                      </GaugeItem>
                    ))}
                    <GaugeItem>
                      <GaugeStack $size={127}>
                        <svg width="127" height="127" viewBox="0 0 120 120"><circle cx="60" cy="60" r="60" fill="#424242" /></svg>
                        <PwaBadge>PWA<i /></PwaBadge>
                      </GaugeStack>
                      <GaugeLabel>Progressive Web App</GaugeLabel>
                    </GaugeItem>
                  </GaugeRow>
                  <Legend>
                    <LegendItem><Swatch $c="#ff4e42" />0–49</LegendItem>
                    <LegendItem><Swatch $c="#ffa51e" />50–89</LegendItem>
                    <LegendItem><Swatch $c="#0cce6b" />90–100</LegendItem>
                  </Legend>
                  <Section>
                    <Gauge score={55} c="#ffa51e" bg="#382c1f" size={143} font={52} />
                    <SectionTitle>Performance</SectionTitle>
                    <Metrics>
                      <MetricsHead>
                        <MetricsTitle>Metrics</MetricsTitle>
                        <Toggle>
                          <ToggleSide $on>
                            <ToggleLine $on $w={32} />
                            <ToggleLine $on $w={20} />
                          </ToggleSide>
                          <ToggleSide>
                            <ToggleLine $w={36} />
                            <ToggleLine $w={36} />
                            <ToggleLine $w={24} />
                          </ToggleSide>
                        </Toggle>
                      </MetricsHead>
                      <MetricGrid>
                        {metricRows.map((pair, i) => pair.map((m, col) => (
                          <MetricRow key={m.name} $last={i === 2}>
                            <MetricIcon $bad={m.bad} $col={col} />
                            <MetricName>{m.name}</MetricName>
                            <MetricValue $bad={m.bad}>{m.value}</MetricValue>
                          </MetricRow>
                        )))}
                      </MetricGrid>
                      <Footnote>
                        Values are estimated and may vary. The <a>performance score is calculated</a> directly from these metrics. <a>See calculator.</a>
                      </Footnote>
                      <TraceButton>View Original Trace</TraceButton>
                    </Metrics>
                  </Section>
                </Report>
                <ScrollTrack><ScrollThumb /></ScrollTrack>
              </ReportBody>
            </Devtools>
            <Page>
              <PageTitle>Space X Launch Program</PageTitle>
              <FilterTitle>Filter</FilterTitle>
              <YearTitle>Launch year</YearTitle>
              <Rule />
              <YearGrid>
                {years.map((y) => <YearButton key={y}>{y}</YearButton>)}
              </YearGrid>
            </Page>
          </ChromeBody>
        </ChromeWindow>

        <Behind>
          <BehindTop />
          <BehindBar><VDots $dot={7} $c="#5a9aa6"><span /><span /><span /></VDots></BehindBar>
          <BehindPage><i /></BehindPage>
        </Behind>
      </Workspace>

      <StatusBar>
        <StatusGroup>
          <VscSourceControl size={24} color="#fff" />
          <StatusLabel $c="#e8e8e8" $margin="0 32px 0 7px">master</StatusLabel>
          <VscSync size={28} />
          <ErrorIcon size={26} />
          <StatusLabel $margin="0 8px 0 8px">0</StatusLabel>
          <VscWarning size={26} />
          <StatusLabel $margin="0 0 0 7px">0</StatusLabel>
        </StatusGroup>
        <StatusGroup $auto>
          <CommitIcon size={26} />
          <StatusLabel $margin="0 32px 0 12px">You, a few seconds ago</StatusLabel>
          <StatusLabel $margin="0 32px 0 0">Ln 13, Col 1</StatusLabel>
          <StatusLabel $margin="0 32px 0 0">Spaces: 2</StatusLabel>
          <StatusLabel $margin="0 32px 0 0">UTF-8</StatusLabel>
          <StatusLabel $margin="0 32px 0 0">LF</StatusLabel>
          <StatusLabel $margin="0 32px 0 0">JavaScript</StatusLabel>
          <VscBroadcast size={26} />
          <StatusLabel $margin="0 32px 0 8px">Go Live</StatusLabel>
          <StatusLabel $margin="0 32px 0 0">Prettier</StatusLabel>
          <VscFeedback size={28} />
          <BellIcon size={28} />
        </StatusGroup>
      </StatusBar>

      <DockRow>
        <Wallpaper />
        <ColorPanel>
          <ColorRow><ColorDot $c="#58d86a" />Green</ColorRow>
          <ColorRow><ColorDot $c="#3b9bf5" />Blue</ColorRow>
        </ColorPanel>
        <Dock>
          <DockIcons items={dockA} />
          <DockSep $left={21} $right={17} />
          <DockIcons items={dockB} />
          <DockSep $left={21} $right={18} />
          <DockIcons items={dockC} />
        </Dock>
      </DockRow>
    </Screen>
  );
}
